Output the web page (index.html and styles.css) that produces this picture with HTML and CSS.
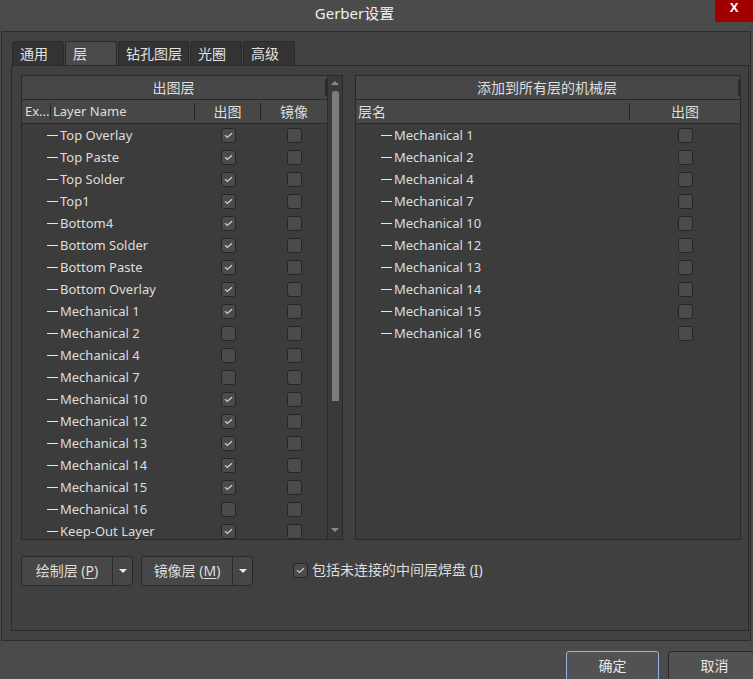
FILE: index.html
```html
<!DOCTYPE html>
<html lang="zh-CN">
<head>
<meta charset="utf-8">
<title>Gerber设置</title>
<link rel="stylesheet" href="styles.css">
</head>
<body>
<div class="titlebar">
  <div class="title">Gerber设置</div>
  <div class="close">X</div>
</div>
<div class="dialog">
  <div class="tabs">
    <div class="tab">通用</div>
    <div class="tab on">层</div>
    <div class="tab w">钻孔图层</div>
    <div class="tab">光圈</div>
    <div class="tab">高级</div>
  </div>
  <div class="panel">
    <div class="tables">
      <div class="tbl l">
        <div class="tmain">
          <div class="cap"><span class="capt">出图层</span><span class="csep"></span></div>
          <div class="thead">
            <div class="th ex">Ex...</div>
            <div class="th ln">Layer Name</div>
            <div class="th c">出图</div>
            <div class="th c last">镜像</div>
          </div>
          <div class="tbody">
            <div class="row"><div class="nm">Top Overlay</div><div class="cb"><span class="chk on"><svg viewBox="0 0 13 13"><polyline points="3,6.2 5.3,8.5 10,4.2"/></svg></span></div><div class="cb"><span class="chk"></span></div></div>
            <div class="row"><div class="nm">Top Paste</div><div class="cb"><span class="chk on"><svg viewBox="0 0 13 13"><polyline points="3,6.2 5.3,8.5 10,4.2"/></svg></span></div><div class="cb"><span class="chk"></span></div></div>
            <div class="row"><div class="nm">Top Solder</div><div class="cb"><span class="chk on"><svg viewBox="0 0 13 13"><polyline points="3,6.2 5.3,8.5 10,4.2"/></svg></span></div><div class="cb"><span class="chk"></span></div></div>
            <div class="row"><div class="nm">Top1</div><div class="cb"><span class="chk on"><svg viewBox="0 0 13 13"><polyline points="3,6.2 5.3,8.5 10,4.2"/></svg></span></div><div class="cb"><span class="chk"></span></div></div>
            <div class="row"><div class="nm">Bottom4</div><div class="cb"><span class="chk on"><svg viewBox="0 0 13 13"><polyline points="3,6.2 5.3,8.5 10,4.2"/></svg></span></div><div class="cb"><span class="chk"></span></div></div>
            <div class="row"><div class="nm">Bottom Solder</div><div class="cb"><span class="chk on"><svg viewBox="0 0 13 13"><polyline points="3,6.2 5.3,8.5 10,4.2"/></svg></span></div><div class="cb"><span class="chk"></span></div></div>
            <div class="row"><div class="nm">Bottom Paste</div><div class="cb"><span class="chk on"><svg viewBox="0 0 13 13"><polyline points="3,6.2 5.3,8.5 10,4.2"/></svg></span></div><div class="cb"><span class="chk"></span></div></div>
            <div class="row"><div class="nm">Bottom Overlay</div><div class="cb"><span class="chk on"><svg viewBox="0 0 13 13"><polyline points="3,6.2 5.3,8.5 10,4.2"/></svg></span></div><div class="cb"><span class="chk"></span></div></div>
            <div class="row"><div class="nm">Mechanical 1</div><div class="cb"><span class="chk on"><svg viewBox="0 0 13 13"><polyline points="3,6.2 5.3,8.5 10,4.2"/></svg></span></div><div class="cb"><span class="chk"></span></div></div>
            <div class="row"><div class="nm">Mechanical 2</div><div class="cb"><span class="chk"></span></div><div class="cb"><span class="chk"></span></div></div>
            <div class="row"><div class="nm">Mechanical 4</div><div class="cb"><span class="chk"></span></div><div class="cb"><span class="chk"></span></div></div>
            <div class="row"><div class="nm">Mechanical 7</div><div class="cb"><span class="chk"></span></div><div class="cb"><span class="chk"></span></div></div>
            <div class="row"><div class="nm">Mechanical 10</div><div class="cb"><span class="chk on"><svg viewBox="0 0 13 13"><polyline points="3,6.2 5.3,8.5 10,4.2"/></svg></span></div><div class="cb"><span class="chk"></span></div></div>
            <div class="row"><div class="nm">Mechanical 12</div><div class="cb"><span class="chk on"><svg viewBox="0 0 13 13"><polyline points="3,6.2 5.3,8.5 10,4.2"/></svg></span></div><div class="cb"><span class="chk"></span></div></div>
            <div class="row"><div class="nm">Mechanical 13</div><div class="cb"><span class="chk on"><svg viewBox="0 0 13 13"><polyline points="3,6.2 5.3,8.5 10,4.2"/></svg></span></div><div class="cb"><span class="chk"></span></div></div>
            <div class="row"><div class="nm">Mechanical 14</div><div class="cb"><span class="chk on"><svg viewBox="0 0 13 13"><polyline points="3,6.2 5.3,8.5 10,4.2"/></svg></span></div><div class="cb"><span class="chk"></span></div></div>
            <div class="row"><div class="nm">Mechanical 15</div><div class="cb"><span class="chk on"><svg viewBox="0 0 13 13"><polyline points="3,6.2 5.3,8.5 10,4.2"/></svg></span></div><div class="cb"><span class="chk"></span></div></div>
            <div class="row"><div class="nm">Mechanical 16</div><div class="cb"><span class="chk"></span></div><div class="cb"><span class="chk"></span></div></div>
            <div class="row"><div class="nm">Keep-Out Layer</div><div class="cb"><span class="chk on"><svg viewBox="0 0 13 13"><polyline points="3,6.2 5.3,8.5 10,4.2"/></svg></span></div><div class="cb"><span class="chk"></span></div></div>
          </div>
        </div>
        <div class="vs">
          <span class="arr up"></span>
          <span class="thumb"></span>
          <span class="arr down"></span>
        </div>
      </div>
      <div class="tbl r">
        <div class="tmain">
          <div class="cap"><span class="capt">添加到所有层的机械层</span><span class="csep"></span></div>
          <div class="thead rh">
            <div class="th ln2">层名</div>
            <div class="th c last">出图</div>
          </div>
          <div class="tbody">
            <div class="row rr"><div class="nm">Mechanical 1</div><div class="cb"><span class="chk"></span></div></div>
            <div class="row rr"><div class="nm">Mechanical 2</div><div class="cb"><span class="chk"></span></div></div>
            <div class="row rr"><div class="nm">Mechanical 4</div><div class="cb"><span class="chk"></span></div></div>
            <div class="row rr"><div class="nm">Mechanical 7</div><div class="cb"><span class="chk"></span></div></div>
            <div class="row rr"><div class="nm">Mechanical 10</div><div class="cb"><span class="chk"></span></div></div>
            <div class="row rr"><div class="nm">Mechanical 12</div><div class="cb"><span class="chk"></span></div></div>
            <div class="row rr"><div class="nm">Mechanical 13</div><div class="cb"><span class="chk"></span></div></div>
            <div class="row rr"><div class="nm">Mechanical 14</div><div class="cb"><span class="chk"></span></div></div>
            <div class="row rr"><div class="nm">Mechanical 15</div><div class="cb"><span class="chk"></span></div></div>
            <div class="row rr"><div class="nm">Mechanical 16</div><div class="cb"><span class="chk"></span></div></div>
          </div>
        </div>
      </div>
    </div>
    <div class="actions">
      <div class="split"><div class="main">绘制层 (<u>P</u>)</div><div class="drop"><span class="tri"></span></div></div>
      <div class="split second"><div class="main">镜像层 (<u>M</u>)</div><div class="drop"><span class="tri"></span></div></div>
      <label class="opt"><span class="chk on"><svg viewBox="0 0 13 13"><polyline points="3,6.2 5.3,8.5 10,4.2"/></svg></span><span class="optt">包括未连接的中间层焊盘 (<u>I</u>)</span></label>
    </div>
  </div>
</div>
<div class="footer">
  <div class="btn ok">确定</div>
  <div class="btn">取消</div>
</div>
</body>
</html>
```
FILE: styles.css
```css
* { box-sizing: border-box; }
html, body { margin: 0; padding: 0; }
body {
  width: 753px;
  height: 679px;
  overflow: hidden;
  background: #4b4b4b;
  font-family: "Noto Sans", "Noto Sans CJK SC", sans-serif;
  font-size: 13px;
  color: #dedede;
}

.titlebar { display: flex; height: 31px; }
.title {
  flex: 1;
  text-align: center;
  font-size: 15px;
  line-height: 20px;
  padding: 3px 6px 0 0;
  color: #f0f0f0;
}
.close {
  width: 38px;
  height: 22px;
  background: #a10000;
  color: #fff;
  font: bold 13px "Liberation Sans", sans-serif;
  text-align: center;
  line-height: 15px;
}

.dialog {
  margin-left: 1px;
  width: 750px;
  height: 610px;
  border: 1px solid #2c2c2c;
  background: #424242;
  padding: 9px 1px 9px 9px;
}

.tabs { display: flex; gap: 1px; height: 24px; margin-left: 1px; }
.tab {
  width: 52px;
  height: 24px;
  padding-left: 7px;
  background: #333333;
  border: 1px solid #2a2a2a;
  border-bottom: none;
  border-radius: 3px 3px 0 0;
  font-size: 14px;
  line-height: 23px;
  color: #e2e2e2;
}
.tab.on { background: #4a4a4a; }
.tab.w { width: 71px; }

.panel {
  height: 566px;
  border: 1px solid #2a2a2a;
  background: #404040;
  padding: 9px 0 0 9px;
}

.tables { display: flex; gap: 12px; height: 465px; }
.tbl {
  display: flex;
  border: 1px solid #2a2a2a;
  background: #3c3c3c;
  overflow: hidden;
}
.tbl.l { width: 322px; }
.tbl.r { width: 386px; }
.tmain { flex: 1; display: flex; flex-direction: column; min-width: 0; }
.tbl.l .tmain { border-right: 1px solid #2a2a2a; }

.cap {
  height: 24px;
  flex: none;
  display: flex;
  align-items: center;
  background: #474747;
  border-bottom: 1px solid #2a2a2a;
  font-size: 14px;
}
.capt { flex: 1; text-align: center; line-height: 20px; }
.csep { width: 2px; height: 17px; background: #2a2a2a; }

.thead {
  height: 24px;
  flex: none;
  display: grid;
  grid-template-columns: 29px 144px 66px 66px;
  align-items: center;
  background: #474747;
  border-bottom: 1px solid #2a2a2a;
}
.thead.rh { grid-template-columns: 274px 110px; }
.th {
  height: 17px;
  line-height: 17px;
  border-right: 1px solid #262626;
  white-space: nowrap;
  overflow: hidden;
}
.th.last { border-right: none; }
.th.ex { padding-left: 3px; }
.th.ln { padding-left: 2px; }
.th.ln2 { padding-left: 2px; font-size: 14px; }
.th.c { text-align: center; font-size: 14px; }

.row {
  height: 22px;
  display: grid;
  grid-template-columns: 173px 66px 66px;
  align-items: center;
}
.row.rr { grid-template-columns: 274px 110px; }
.nm {
  display: flex;
  align-items: center;
  padding-left: 25px;
  white-space: nowrap;
}
.nm::before {
  content: "";
  width: 11px;
  height: 1px;
  background: #e4e4e4;
  margin-right: 2px;
}
.cb { display: flex; justify-content: center; }

.chk {
  display: block;
  width: 15px;
  height: 15px;
  border: 1px solid #262626;
  border-radius: 3px;
  background: #4b4b4b;
}
.chk svg { display: block; width: 13px; height: 13px; }
.chk polyline { fill: none; stroke: #d4d4d4; stroke-width: 1.2; }

.vs {
  width: 14px;
  flex: none;
  display: flex;
  flex-direction: column;
  align-items: center;
  background: #3a3a3a;
  padding: 5px 0 7px;
}
.arr { width: 0; height: 0; border-left: 4px solid transparent; border-right: 4px solid transparent; }
.arr.up { border-bottom: 4px solid #8a8a8a; }
.arr.down { border-top: 4px solid #8a8a8a; margin-top: auto; }
.thumb {
  width: 7px;
  height: 310px;
  margin-top: 6px;
  background: #7c7c7c;
  border-radius: 3px 3px 0 0;
}

.actions { display: flex; align-items: flex-start; margin-top: 16px; }
.split {
  display: flex;
  width: 112px;
  height: 30px;
  border: 1px solid #2a2a2a;
  border-radius: 3px;
  background: #474747;
}
.split.second { margin-left: 8px; }
.split .main {
  width: 91px;
  text-align: center;
  font-size: 14px;
  line-height: 27px;
  border-right: 1px solid #2a2a2a;
  white-space: nowrap;
}
.split .main u { text-underline-offset: 2px; }
.drop { flex: 1; display: flex; align-items: center; justify-content: center; }
.tri {
  width: 0; height: 0;
  border-left: 4px solid transparent;
  border-right: 4px solid transparent;
  border-top: 4px solid #e6e6e6;
}
.opt {
  display: flex;
  align-items: center;
  margin: 5px 0 0 40px;
  font-size: 14px;
}
.optt { margin-left: 4px; line-height: 18px; }

.footer {
  display: flex;
  justify-content: flex-end;
  gap: 9px;
  padding-top: 10px;
  margin-right: -8px;
}
.btn {
  width: 93px;
  height: 30px;
  border: 1px solid #2a2a2a;
  border-radius: 3px;
  background: #525252;
  text-align: center;
  font-size: 14px;
  line-height: 28px;
  color: #e8e8e8;
}
.btn.ok { border-color: #8fb6de; }
```
